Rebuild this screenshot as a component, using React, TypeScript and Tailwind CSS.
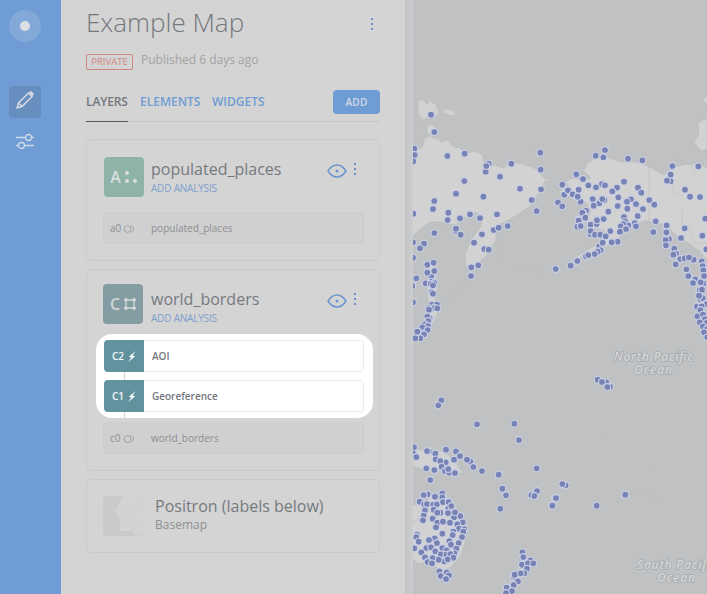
import React from 'react';

type Point = [number, number];
type Region = { x: number; y: number; points: Point[] };

// Populated places, stored per region in thirds of a pixel from the region's origin.
const regions: Region[] = [
  {
    x: 405,
    y: 90,
    points: [
      [78, 74], [88, 126], [28, 176], [29, 195], [25, 214], [127, 198], [179, 191], [251, 221], [242, 245], [244, 228],
      [319, 221], [406, 188], [407, 239], [285, 260], [178, 273], [345, 296], [408, 298], [153, 311], [235, 320],
      [380, 330], [395, 363], [88, 333], [84, 357], [25, 370], [128, 388], [130, 368], [195, 373], [276, 373],
      [165, 384], [225, 384], [459, 337],
    ],
  },
  {
    x: 550,
    y: 90,
    points: [
      [137, 197], [165, 180], [160, 202], [234, 206], [277, 211], [79, 253], [99, 267], [37, 284], [43, 314], [54, 301],
      [68, 313], [86, 299], [92, 335], [83, 320], [115, 286], [138, 292], [156, 282], [165, 286], [222, 275], [201, 293],
      [187, 304], [264, 293], [274, 308], [24, 337], [37, 349], [128, 327], [148, 340], [131, 347], [163, 330], [157, 327],
      [205, 322], [243, 328], [231, 335], [258, 342], [203, 348], [232, 356], [279, 357], [298, 330], [313, 344],
      [175, 365], [108, 362], [99, 368], [106, 383], [263, 378], [222, 381], [141, 388], [160, 387], [86, 390],
      [367, 228], [362, 254], [362, 274], [351, 272], [445, 229], [405, 299], [420, 320], [450, 321], [466, 384],
    ],
  },
  {
    x: 405,
    y: 210,
    points: [
      [25, 11], [128, 30], [165, 25], [225, 24], [88, 69], [153, 63], [167, 74], [153, 56], [231, 73], [266, 60],
      [281, 53], [308, 48], [207, 98], [238, 117], [251, 119], [220, 166], [199, 172], [198, 198], [452, 178], [57, 101],
      [45, 115], [24, 97], [24, 143], [67, 164], [86, 158], [79, 198], [67, 188], [88, 183], [34, 205], [62, 220],
      [80, 215], [88, 219], [77, 222], [84, 226], [80, 246], [84, 251], [24, 277], [22, 228], [81, 284], [96, 284],
      [70, 294], [88, 294], [72, 299], [97, 295], [74, 324], [67, 320], [70, 333], [60, 343], [69, 348], [52, 352],
      [68, 360], [44, 367], [57, 373], [37, 365], [46, 385], [31, 385],
    ],
  },
  {
    x: 550,
    y: 210,
    points: [
      [97, 8], [106, 23], [86, 32], [82, 50], [92, 48], [122, 44], [140, 42], [141, 31], [161, 27], [121, 72], [122, 63],
      [135, 74], [151, 74], [167, 79], [181, 63], [222, 21], [225, 34], [235, 46], [220, 42], [212, 49], [228, 57],
      [210, 65], [254, 39], [258, 49], [263, 18], [203, 95], [185, 97], [148, 109], [158, 98], [152, 121], [143, 125],
      [134, 132], [108, 139], [115, 135], [82, 153], [62, 167], [17, 177], [317, 34], [350, 46], [310, 66], [349, 67],
      [357, 87], [347, 90], [348, 106], [404, 55], [393, 84], [457, 77], [466, 26], [469, 118], [373, 116], [378, 131],
      [370, 134], [391, 147], [404, 145], [431, 149], [417, 142], [377, 163], [409, 178], [415, 198], [455, 154],
      [458, 168], [460, 181], [462, 198], [436, 208], [429, 219], [460, 220], [452, 217], [449, 240], [456, 239],
      [451, 268], [458, 264], [447, 257], [470, 282], [441, 290], [455, 289], [451, 300], [442, 319], [459, 314],
      [465, 327], [449, 337], [471, 338], [459, 349], [471, 357], [462, 367], [472, 382], [143, 509], [169, 517],
      [156, 516], [180, 530], [172, 531],
    ],
  },
  {
    x: 405,
    y: 380,
    points: [
      [109, 61], [100, 76], [216, 133], [328, 131], [342, 180], [27, 202], [24, 220], [34, 231], [72, 214], [66, 213],
      [123, 209], [153, 214], [91, 221], [165, 228], [147, 239], [92, 238], [122, 247], [106, 243], [196, 245],
      [186, 239], [205, 261], [231, 273], [281, 284], [64, 265], [88, 270], [110, 260], [120, 273], [133, 278],
      [130, 267], [150, 279], [76, 300], [292, 326], [303, 346], [286, 386], [395, 265], [396, 333], [379, 345],
      [388, 348], [450, 354], [441, 377], [68, 343], [56, 345], [90, 350], [112, 340], [112, 352], [44, 365], [58, 373],
      [66, 372], [85, 374], [96, 373], [114, 366], [131, 366], [60, 391], [86, 389], [106, 398], [97, 398], [130, 386],
      [129, 399], [139, 378], [56, 407], [54, 421], [83, 416], [166, 408], [147, 412], [150, 397], [97, 428], [114, 425],
      [93, 442], [135, 428], [173, 427], [157, 433], [162, 446], [178, 447], [145, 455], [175, 455], [36, 464],
      [34, 471], [112, 461], [171, 471], [143, 465], [28, 505], [41, 485], [89, 475], [72, 480], [96, 489], [133, 483],
      [161, 489], [138, 494], [154, 506], [64, 504], [78, 502], [112, 504], [49, 517], [91, 514], [125, 511], [148, 520],
      [107, 523], [124, 524], [136, 522], [60, 532], [83, 534], [145, 533], [68, 546], [81, 550], [118, 544], [128, 538],
      [101, 539], [103, 574], [125, 577], [132, 586], [107, 588], [123, 597], [352, 517], [355, 531], [376, 541],
      [351, 554], [369, 550], [385, 550], [366, 566], [358, 580], [347, 580], [326, 589], [329, 584], [339, 604],
      [326, 615], [305, 623], [321, 633], [303, 639],
    ],
  },
  {
    x: 550,
    y: 380,
    points: [[47, 316], [37, 312], [18, 354], [7, 377], [140, 377], [226, 344]],
  },
];

const Dots3 = ({ className = '' }: { className?: string }) => (
  <svg viewBox="0 0 4 14" className={`h-3.5 w-1 ${className}`} fill="#6890c8">
    <rect x="1" y="1" width="2" height="2" />
    <rect x="1" y="6" width="2" height="2" />
    <rect x="1" y="11" width="2" height="2" />
  </svg>
);

const Eye = () => (
  <svg viewBox="0 0 20 14" className="h-3.5 w-5" fill="none" stroke="#6b95cd" strokeWidth="1.5">
    <path d="M1 7C3.500 3 6.500 1 10 1s6.500 2 9 6c-2.500 4-5.500 6-9 6s-6.500-2-9-6Z" />
    <circle cx="10" cy="7" r="1.500" fill="#6b95cd" stroke="none" />
  </svg>
);

const Rings = () => (
  <svg viewBox="0 0 13 8" className="h-2 w-[13px]" fill="none" stroke="#9b9da0" strokeWidth="0.9">
    <circle cx="4.500" cy="4" r="3.400" />
    <path d="M8.300 .8a3.400 3.400 0 0 1 0 6.400" />
  </svg>
);

const Bolt = () => (
  <svg viewBox="0 0 8 11" className="h-[11px] w-2" fill="#f4f8f8">
    <path d="M7.500 0 .8 5.700l2.400.8L.4 11 7.200 5.300 4.700 4.400Z" />
  </svg>
);

function LayerHead({ name, icon, className = '' }: { name: string; icon: React.ReactNode; className?: string }) {
  return (
    <div className="flex h-10">
      {icon}
      <div className={`flex ${className}`}>
        <div className="w-[176px] shrink-0">
          <div className="h-6 whitespace-nowrap text-[16px] leading-6 text-[#767a7f]">{name}</div>
          <div className="mt-px whitespace-nowrap text-[10px] leading-3 tracking-[-0.02em] text-[#7e9fce]">
            ADD ANALYSIS
          </div>
        </div>
        <div className="mt-[7px] flex">
          <Eye />
          <Dots3 className="-mt-[2px] ml-1.5" />
        </div>
      </div>
    </div>
  );
}

function SourceRow({ id, name }: { id: string; name: string }) {
  return (
    <div className="flex h-8 w-[261px] items-center rounded border border-[#cccccd] bg-[#d0d0d0] pl-1.5 pt-px text-[10px] text-[#8c8f93]">
      <span className="w-[13px]">{id}</span>
      <Rings />
      <span className="ml-[15px]">{name}</span>
    </div>
  );
}

function AnalysisRow({ id, name }: { id: string; name: string }) {
  return (
    <div className="flex h-8 w-[260px] overflow-hidden rounded">
      <div className="flex w-10 items-center justify-center gap-1 bg-[#62929e] pt-px text-[10px] font-semibold text-[#f4f8f8]">
        {id}
        <Bolt />
      </div>
      <div className="flex grow items-center rounded-r border border-l-0 border-[#ebebeb] bg-white pl-2 pt-px text-[10px] font-semibold text-[#74787d]">
        {name}
      </div>
    </div>
  );
}

function Sidebar() {
  return (
    <nav className="flex w-[61px] shrink-0 flex-col items-start bg-[#6f9cd4] pl-[9px] pt-[10px]">
      <div className="flex size-8 items-center justify-center rounded-full bg-[#82a9d7]">
        <div className="size-2.5 rounded-full bg-[#dbdfe3]" />
      </div>
      <div className="mt-11 flex size-8 items-center justify-center rounded bg-[#668ebf]">
        <svg viewBox="0 0 20 20" className="mb-1 size-5" fill="none" stroke="#d5dbe2" strokeWidth="1.500">
          <path d="M2 18l1.500-5L13.500 3l3.500 3.500L7 16.500Zm1.500-5L7 16.500" />
          <path d="M14.800 1.800l3.400 3.400" strokeWidth="3" />
        </svg>
      </div>
      <svg viewBox="0 0 18 16" className="ml-[7px] mt-[15px] h-4 w-[18px]" fill="none" stroke="#cfdaea" strokeWidth="1.300">
        <path d="M0 4.500h9.500M15.500 4.500H18M0 12.500h2.500M8.500 12.500H18" />
        <circle cx="12.500" cy="4.500" r="3" />
        <circle cx="5.500" cy="12.500" r="3" />
      </svg>
    </nav>
  );
}

function MapView() {
  return (
    <svg viewBox="413 0 294 594" className="h-[594px] w-[294px] shrink-0 bg-[#bfc1c2]">
      <g fill="#d2d2d2" stroke="#b4b6b7" strokeWidth="0.4">
        <path d="M413 150l9-2 3-10 5-2 5 3 3-1 3 4 6-2 7 7 6 1 5 6 10-3 7 3 3 12 10-1 8 3 7-5 8 0 11 3 9 4 5 7 10 6 3 6 5 2 3-5 10-2 2 7-8 5-8-4-9-10-6-1-5 10-10 15-18 12-12 6-4 6 0 10-10 16-14 12-6-2-1-12 6-14 10-14 2-10-8-4-9 5-12 8-14-3-10 0-10 7-12 12-3 12 9 18-2 13-11 20Z" />
        <path d="M418 102l4-3 5 5 3-3 6 4 3 7-4 5-8 1-4 2-5-6ZM443 109l9 1 4 4-4 2-8-3ZM427 127l3-3 5 3 3 8-7 1-4-4Z" />
        <path d="M536 150l5-2 4 4-2 4-5 0Z" />
        <path d="M577 175l6-2 4-9 8-6 11-1 14 5 12 0 12 2 14 8 6 3 11-8 11-3 12 0 10 4 10-1v120l-9-24-9-12-13-9-12-8-8-8-10-4-12-1-11 4-6 4-8 8-9 7-16 8-12 5-9 1 22-13 12-10-5-5-10-2-6-8 4-9-5-9-11-1-9-8 5-6-6-5 8-4 10 2 8-2-6-6Z" />
        <path d="M707 118l-9 5 1 11-5 8 7 9 6-2ZM707 95l-5 6 5 2Z" />
        <path d="M413 450l13 0 15 1 14 9 4 8 5 5-8 0-12-5-12 4-11-3-8-3Z" />
        <path d="M413 505l11-1 10-11 5 10 7-9 5 10 8 14 7 13-1 11-4 13-10 12-10 5-5-5-10-5-8 2-8-8Z" />
        <path d="M437 571l11 1-2 9-6-1ZM521 551l5 9 7 4-9 13-5-1 2-9ZM518 576l-7 8-8 10h9l10-14Z" />
        <path d="M430 261l6 10 1 17-3 17 6 3-6 13-12 18-9 2 12-16 4-14-2-25Z" />
      </g>
      <g fill="none" stroke="#bcbec0" strokeWidth="0.6">
        <path d="M649 164v62l8 3 8 9 9 8M671 178l3 14 9 4M682 210v14l9 5 3 14 13 0M675 160l16 5 5 10" />
        <path d="M440 303l12-9 11-6 4-5M463 288l6-14M518 268l5 1M530 270l8 2 3-2M498 256l6 1M413 521l4 0 2-5 0 6 7-1M563 486l3 1M603 433l3 2M652 468l3 3M638 489l3 1M649 497l2-3M661 497l3 1" />
      </g>
      <g fill="#7782b5" stroke="#cad0e4" strokeWidth="1.100">
        {regions.map((r) =>
          r.points.map(([px, py], i) => (
            <circle key={`${r.x}-${r.y}-${i}`} cx={r.x + px / 3} cy={r.y + py / 3} r="3.400" />
          )),
        )}
      </g>
      <g
        className="[paint-order:stroke]"
        fill="#d5d7d9"
        stroke="#a6aaad"
        strokeWidth="1.500"
        fontFamily="'Open Sans'"
        fontStyle="italic"
        fontWeight="600"
        fontSize="12"
        textAnchor="middle"
      >
        <text x="653.500" y="361" textLength="79">North Pacific</text>
        <text x="653" y="374" textLength="38">Ocean</text>
        <text x="676.500" y="569" textLength="79">South Pacific</text>
        <text x="676" y="582" textLength="38">Ocean</text>
      </g>
    </svg>
  );
}

export default function App() {
  return (
    <div className="flex h-[594px] w-[707px] overflow-hidden bg-[#d4d4d4] font-['Open_Sans',sans-serif]">
      <Sidebar />
      <main className="w-[344px] shrink-0 pl-[25px]">
        <header className="flex h-[46px] w-[294px] justify-between">
          <h1 className="text-[26px] font-light leading-[44px] text-[#74787d]">Example Map</h1>
          <Dots3 className="mr-1.5 mt-[17px]" />
        </header>
        <div className="flex h-[42px] items-start pt-[7px]">
          <span className="mt-[1px] flex h-4 w-[47px] items-center justify-center rounded-[2px] border border-[#cf8781] pt-px text-[9.500px] text-[#cf8781]">
            PRIVATE
          </span>
          <span className="ml-2 text-[12px] leading-[14px] text-[#a1a3a5]">Published 6 days ago</span>
        </div>
        <div className="flex h-[34px] w-[294px] border-b border-[#c6c7c8] text-[12px] font-semibold leading-[27px] text-[#6f9cd4]">
          <span className="h-[34px] w-[42px] border-b border-[#555a5f] tracking-[-0.01em] text-[#74787d]">LAYERS</span>
          <span className="ml-3 w-[60px]">ELEMENTS</span>
          <span className="ml-3">WIDGETS</span>
          <button className="ml-auto mt-[2px] h-6 w-[47px] rounded bg-[#6f9cd4] text-[10px] font-semibold leading-[25px] tracking-wide text-[#d0d9e4]">
            ADD
          </button>
        </div>
        <section className="mt-[17px] h-[122px] w-[294px] rounded border border-[#cbcbcc] pl-[17px] pt-[17px]">
          <LayerHead
            name="populated_places"
            className="pl-[7px]"
            icon={
              <div className="flex size-10 shrink-0 items-center justify-center gap-1 rounded bg-[#8eb3a8] text-[16px] font-semibold text-[#d9dedc]">
                A
                <svg viewBox="0 0 13 12" className="h-3 w-[13px]" fill="#d9dedc">
                  <circle cx="2" cy="2" r="2" />
                  <circle cx="2" cy="10" r="2" />
                  <circle cx="10" cy="10" r="2" />
                </svg>
              </div>
            }
          />
          <div className="-ml-px mt-[15px]">
            <SourceRow id="a0" name="populated_places" />
          </div>
        </section>
        <section className="mt-2 h-[202px] w-[294px] rounded border border-[#cbcbcc] pl-4 pt-[14px]">
          <LayerHead
            name="world_borders"
            className="pl-2 pt-[3px]"
            icon={
              <div className="flex size-10 shrink-0 items-center justify-center gap-1 rounded bg-[#849da3] text-[16px] font-semibold text-[#d0d6d8]">
                C
                <svg viewBox="0 0 12 12" className="size-3" fill="none" stroke="#d5dadb" strokeWidth="1.300">
                  <path d="M2 2h8v8H2Z" />
                  <g fill="#d5dadb" stroke="none">
                    <circle cx="1.800" cy="1.800" r="1.800" />
                    <circle cx="10.200" cy="1.800" r="1.800" />
                    <circle cx="1.800" cy="10.200" r="1.800" />
                    <circle cx="10.200" cy="10.200" r="1.800" />
                  </g>
                </svg>
              </div>
            }
          />
          <div className="-ml-[7px] mt-[10px] flex h-[84px] w-[277px] flex-col rounded-[16px] bg-white pl-2 pt-1.5">
            <AnalysisRow id="C2" name="AOI" />
            <div className="ml-5 h-2 w-px bg-[#d5d5d5]" />
            <AnalysisRow id="C1" name="Georeference" />
            <div className="ml-5 h-1.5 w-px bg-[#d5d5d5]" />
          </div>
          <div className="mt-1">
            <SourceRow id="c0" name="world_borders" />
          </div>
        </section>
        <section className="mt-2 flex h-[74px] w-[294px] rounded border border-[#cbcbcc] pl-4 pt-4">
          <svg viewBox="0 0 40 40" className="size-10 rounded">
            <path fill="#c8cacc" d="M0 0h40v40H0Z" />
            <path fill="#d3d3d3" d="M20 0h20v38l-8 2-2-5H17v-8l-2-7-3-4 4-8Z" />
            <path fill="none" stroke="#cbcccd" strokeWidth="0.6" d="M17 9h14l8 4M16 17l12 1 3 6 8 2M28 18v-8M18 25l9 2 3 8" />
          </svg>
          <div className="ml-3 whitespace-nowrap">
            <div className="h-5 text-[16px] leading-5 text-[#767a7f]">Positron (labels below)</div>
            <div className="mt-px text-[12px] leading-4 text-[#8d9093]">Basemap</div>
          </div>
        </section>
      </main>
      <div className="w-2 shrink-0 bg-linear-to-r from-[#c2c4c7] to-[#cbcdcf]" />
      <MapView />
    </div>
  );
}
